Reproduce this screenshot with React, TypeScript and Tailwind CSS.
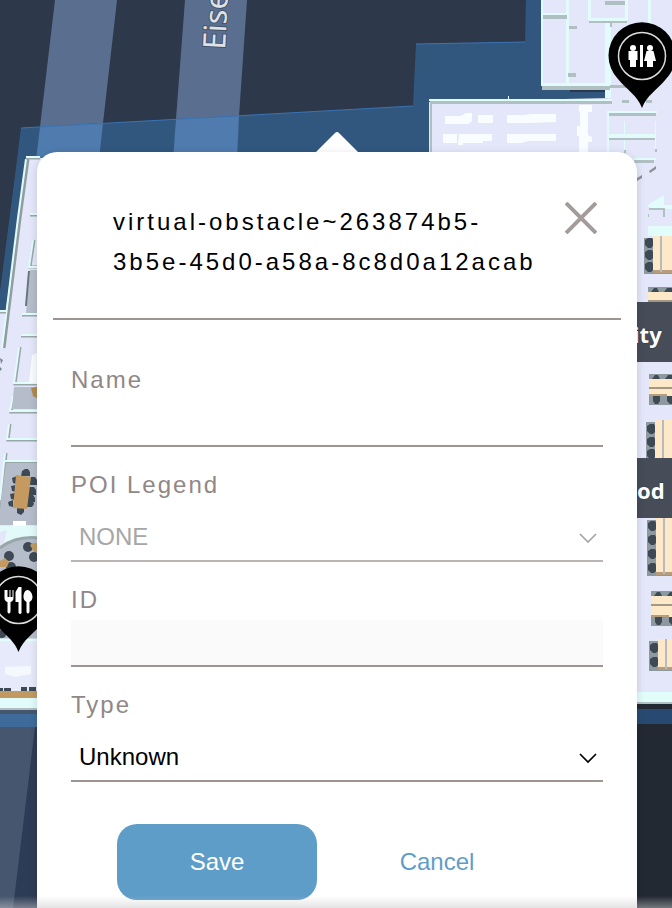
import React, { useState } from "react";

const BLUE = "#31577f";
const FLOOR = "#e3e7f9";
const WALL = "#e2fcfc";
const SHADE = "#b0bfc2";
const WOOD = "#fde9c8";
const CHAIR = "#3d4a56";
const MAT = "#8d999f";

type Box = [x: number, y: number, w: number, h: number];

function Boxes({ items, fill }: { items: Box[]; fill: string }) {
  return (
    <g fill={fill}>
      {items.map(([x, y, w, h], i) => (
        <rect key={i} x={x} y={y} width={w} height={h} />
      ))}
    </g>
  );
}

/* Desk block with chairs along its left side. */
function SideDesk({ x, y, h, rows }: { x: number; y: number; h: number; rows: number[] }) {
  return (
    <g>
      <rect x={x} y={y} width="40" height={h} fill={MAT} />
      <rect x={x + 9} y={y - 2} width="40" height={h} fill={WOOD} />
      <rect x={x + 9} y={y + h - 4} width="30" height="3" fill="#b59d7d" />
      <rect x={x + 16} y={y - 2} width="2" height={h} fill="#b8bac0" />
      {rows.map((r) => (
        <path key={r} d={`M${x + 1} ${r - 3}l3-2h4l1 2v6l-2 2h-3l-3-3z`} fill={CHAIR} />
      ))}
    </g>
  );
}

/* Desk block with chairs above and below. */
function FlatDesk({ x, y, h }: { x: number; y: number; h: number }) {
  return (
    <g>
      <rect x={x} y={y} width="40" height={h} fill={MAT} />
      <g fill={CHAIR}>
        <path d={`M${x + 3} ${y + 5}l3-4h3l2 4zM${x + 16} ${y + 5}l3-4h8v4z`} />
        <path d={`M${x + 4} ${y + h - 9}h7v5l-2 3h-3l-2-3zM${x + 18} ${y + h - 9}h9v8h-6l-3-3z`} />
      </g>
      <rect x={x} y={y + 5} width="40" height={h - 14} fill={WOOD} />
      <rect x={x} y={y + 13} width="40" height="2" fill="#a39885" />
      <rect x={x} y={y + h - 11} width="18" height="2" fill="#b59d7d" />
    </g>
  );
}

function Pin({ x, y, children }: { x: number; y: number; children: React.ReactNode }) {
  return (
    <g transform={`translate(${x} ${y})`}>
      <path d="M0 52C-5 39-14 35-24 23A33.500 33.500 0 1 1 24 23C14 35 5 39 0 52Z" fill="#000" />
      <circle r="23.500" fill="none" stroke="#ddd" strokeWidth="1.500" />
      <g fill="#fff">{children}</g>
    </g>
  );
}

function FloorMap() {
  return (
    <svg
      aria-hidden="true"
      className="absolute inset-0 h-full w-full"
      viewBox="0 0 672 908"
      preserveAspectRatio="xMidYMin slice"
      fontFamily='"Noto Sans", sans-serif'
    >
      <rect width="672" height="908" fill="#2d394b" />
      <path d="M21 128L413 106 416 44 525 42 526 0H672V908H0V290Z" fill={BLUE} />
      <path d="M55 0H117L103 123 40 127Z" fill="#5a6f8f" />
      <path d="M185 0H247L239 116 176 119Z" fill="#5a6f8f" />
      <path d="M40 127L103 123 99 160H36ZM176 119L239 116 237 160H173Z" fill="#4f7bae" />
      <path d="M21 128L413 106M416 44L525 42" stroke="#3b74b3" strokeWidth="1" />
      <text
        transform="translate(225 50) rotate(-87)"
        fontSize="31"
        fill="#dfe1e4"
        stroke="#42536c"
        strokeWidth="2"
        paintOrder="stroke"
      >
        Eise
      </text>

      {/* north-east rooms */}
      <path d="M542 0H672V720H600V152H429V102L610 98V88H542Z" fill={FLOOR} />
      <rect x="544" y="90" width="65" height="7" fill={BLUE} />
      <rect x="570" y="89" width="39" height="3" fill="#29384f" />
      <Boxes
        fill={WALL}
        items={[
          [541, 0, 2, 86], [566, 0, 3, 86], [588, 0, 3, 20], [605, 20, 6, 78], [625, 0, 3, 20],
          [648, 0, 3, 26], [543, 13, 24, 2], [542, 83, 68, 3], [589, 18, 38, 3], [429, 99, 183, 2],
          [508, 96, 1, 4], [607, 111, 50, 2], [607, 111, 2, 41], [607, 134, 49, 4], [624, 121, 1, 31],
          [655, 121, 1, 30], [634, 158, 22, 2], [650, 205, 22, 4], [648, 226, 24, 10],
        ]}
      />
      <Boxes
        fill={SHADE}
        items={[
          [543, 15, 24, 4], [542, 86, 68, 4], [610, 85, 17, 3], [605, 1, 20, 4], [589, 21, 38, 2],
          [610, 21, 2, 6], [569, 26, 8, 3], [568, 73, 8, 4], [430, 101, 182, 3], [430, 103, 2, 49],
          [622, 100, 7, 3], [646, 100, 6, 3], [609, 113, 47, 3], [609, 138, 46, 2], [624, 150, 2, 3],
          [634, 160, 20, 3], [655, 149, 2, 3], [663, 208, 2, 9], [649, 208, 14, 2], [648, 214, 1, 3],
        ]}
      />
      <path d="M648 205L664 195V207H648Z" fill={WALL} />
      <path d="M637 178L642 175V178L637 181ZM649 171L656 166V169L650 173Z" fill="#899496" />
      <g fill="#fafdff">
        <path d="M445 116H461L466 113H472V121L468 124H445ZM478 115H493V123H478ZM507 115H524L532 114H556V122L530 123H507Z" />
        <path d="M443 134H457V143H443ZM459 134H492V141H483V143H463V145H458ZM507 134H556V141H528L522 143H507Z" />
        <path d="M579 105H592V112H588V135L592 137V142H588V152H579V136H577V126H580V112H579Z" />
      </g>

      {/* east desks */}
      <SideDesk x={644} y={238} h={36} rows={[243, 255, 267]} />
      <FlatDesk x={648} y={287} h={30} />
      <FlatDesk x={649} y={374} h={31} />
      <SideDesk x={646} y={422} h={45} rows={[429, 442, 454]} />
      <SideDesk x={647} y={520} h={56} rows={[526, 540, 554, 568]} />
      <FlatDesk x={651} y={591} h={35} />
      <SideDesk x={649} y={641} h={30} rows={[648, 662]} />
      <Boxes fill="#464d59" items={[[600, 302, 72, 60], [600, 458, 72, 60]]} />
      <g fontSize="22" fontWeight="700" fill="#fff" stroke="#343b46" strokeWidth="1" paintOrder="stroke">
        <text x="633" y="343">ity</text>
        <text x="637" y="499">od</text>
      </g>
      <Boxes fill={WALL} items={[[630, 692, 42, 10]]} />
      <Boxes fill={SHADE} items={[[630, 702, 42, 2]]} />
      <Boxes fill="#222933" items={[[600, 704, 72, 204]]} />
      <Boxes fill="#284a72" items={[[630, 709, 42, 15]]} />

      {/* west wing */}
      <path d="M27 158H60V712H0V312L6 310Z" fill={FLOOR} />
      <path d="M0 150H18L0 290Z" fill="#2d394b" />
      <path d="M28 159L20 218 4 348" fill="none" stroke="#8f9d9f" strokeWidth="3" />
      <path d="M26 159L18 218 2 348" fill="none" stroke={WALL} strokeWidth="2" />
      <path
        d="M26 158H40M30 215H40M34 240L30 267H40M22 315H40M21 336H40M20 347L15 384H40M14 396L11 412H40M10 424L8 440H40M0 312H6M6 453L1 510M4 462H40"
        fill="none"
        stroke="#98a7a8"
        strokeWidth="3"
      />
      <path
        d="M26 157H40M30 214H40M33 240L29 267H40M22 314H40M21 335H40M19 347L14 383H40M13 396L10 411H40M9 424L7 439H40M0 311H6M5 453L0 500M4 461H40"
        fill="none"
        stroke={WALL}
        strokeWidth="2"
      />
      <path d="M30 270H40V313H26ZM14 387H40V409H12Z" fill="#b6bdca" />
      <path d="M29 271L26 306" stroke="#66777c" strokeWidth="2" />
      <path d="M32 355L40 352V383H29Z" fill="#fafdff" />
      <path d="M31 388L40 386V400L33 396Z" fill="#b38a50" />
      <path d="M0 358L3 360 1 364ZM0 367L2 369 0 371Z" fill="#78878a" />

      <path d="M6 463H40V525H0V510Z" fill="#b6bdca" />
      <path d="M13 521H26V526H13Z" fill="#fff" />
      <g fill={CHAIR}>
        <path d="M22 471l3-2h3l2 3v4h-9zM17 507h7v5l-3 3-4-2z" />
        <path d="M12 478l5-2v8l-4-1zM11 486l5-1v7l-4-1zM10 494l5-1v7l-4-1zM8 502l5-2v7l-4-1z" />
        <path d="M29 477h6l2 3v5h-8zM29 487h5l2 3v5h-8zM28 495h5l2 3v4h-7zM27 501h6l1 3-2 3h-5z" />
      </g>
      <path d="M16 475L31 477 27 509 13 508Z" fill="#c49a60" />
      <path d="M0 526H40V600H0Z" fill="#e2fafa" />
      <path d="M0 532L7 530 0 560Z" fill={FLOOR} />
      <path d="M0 548C10 540 23 536 40 538V640H0Z" fill="#b6bdca" />
      <path d="M0 548C10 540 23 536 40 538" fill="none" stroke="#98a7a8" strokeWidth="3" />
      <g fill={CHAIR}>
        <circle cx="28" cy="547" r="5" />
        <circle cx="34" cy="557" r="5" />
        <circle cx="9" cy="556" r="5" />
        <circle cx="11" cy="567" r="5" />
        <circle cx="2" cy="634" r="4" />
      </g>
      <path d="M30 545L33 543H40V552H34ZM0 561L5 558 9 562 7 567H0Z" fill="#c49a60" />
      <path d="M0 641H40V691H0Z" fill="#e7eafb" />
      <path d="M0 640H40" stroke={WALL} strokeWidth="3" />
      <path d="M5 667L31 666V674L15 677 5 674Z" fill="#f5f8fd" />
      <path d="M0 688H3V691H0ZM4 688H11V691H4ZM21 687H27V691H21ZM29 687H36V691H29Z" fill={CHAIR} />
      <Boxes fill="#c09a62" items={[[0, 691, 40, 7]]} />
      <Boxes fill={WALL} items={[[0, 698, 40, 10]]} />
      <Boxes fill={SHADE} items={[[0, 708, 40, 2]]} />
      <Boxes fill="#46566f" items={[[0, 710, 40, 4]]} />
      <Boxes fill="#3f6b9b" items={[[0, 714, 40, 13]]} />
      <rect y="727" width="60" height="181" fill="#2d3c56" />
      <path d="M0 727H35L13 908H0Z" fill="#46566f" />

      <Pin x={642} y={56}>
        <circle cx="-9" cy="-8" r="3" />
        <path d="M-13.500-5H-4.500V4H-6V11H-12V4H-13.500Z" />
        <rect x="-2" y="-11" width="3" height="22" />
        <circle cx="8" cy="-8" r="3" />
        <path d="M4.500-5H11.500L14 5H11V11H5V5H2Z" />
      </Pin>
      <Pin x={18.5} y={600}>
        <path d="M-14-10v8q0 3 3 4v10q1 3 3 0v-10q3-1 3-4v-8h-1v7h-2v-7h-1v7h-2v-7z" />
        <path d="M-3 2v-10l3-5h3v26q-1 2-3 0v-11z" />
        <path d="M9-10c-3 0-4 4-4 7 0 2 1 4 3 5v10q1 3 3 0v-10c2-1 3-3 3-5 0-3-2-7-5-7z" />
      </Pin>
    </svg>
  );
}

function Label({ htmlFor, children }: { htmlFor: string; children: React.ReactNode }) {
  return (
    <label htmlFor={htmlFor} className="block text-2xl leading-10 tracking-[2px] text-[#918786]">
      {children}
    </label>
  );
}

function TextField({ id, label, disabled }: { id: string; label: string; disabled?: boolean }) {
  return (
    <div>
      <Label htmlFor={id}>{label}</Label>
      <input
        id={id}
        type="text"
        disabled={disabled}
        className="block h-[47px] w-full border-b-2 border-[#9c9594] bg-white px-2 text-2xl text-black outline-none disabled:bg-[#fafafa]"
      />
    </div>
  );
}

function SelectField({
  id,
  label,
  options,
  disabled,
}: {
  id: string;
  label: string;
  options: string[];
  disabled?: boolean;
}) {
  return (
    <div>
      <Label htmlFor={id}>{label}</Label>
      <div className="relative mt-2.5">
        <select
          id={id}
          disabled={disabled}
          className="peer block h-[47px] w-full appearance-none border-b-2 border-[#9c9594] bg-white pr-10 pb-0.5 pl-2 text-2xl text-black opacity-100 outline-none disabled:border-[#bab4b4] disabled:text-[#a6a6a6]"
        >
          {options.map((o) => (
            <option key={o}>{o}</option>
          ))}
        </select>
        <svg
          aria-hidden="true"
          viewBox="0 0 20 12"
          className="pointer-events-none absolute top-[17px] right-[5px] h-3 w-5 text-black peer-disabled:text-[#a6a6a6]"
          fill="none"
          stroke="currentColor"
          strokeWidth="1.700"
        >
          <path d="M2 2L10 10 18 2" />
        </svg>
      </div>
    </div>
  );
}

export default function App() {
  const [open, setOpen] = useState(true);
  const close = () => setOpen(false);

  return (
    <main className="relative flex min-h-screen flex-col overflow-hidden font-['Liberation_Sans',Arial,sans-serif]">
      <FloorMap />
      {open && (
        <div className="relative flex grow flex-col pt-[132px] pr-[35px] pl-[37px]">
          <svg aria-hidden="true" viewBox="0 0 42 20" className="h-5 w-[42px] self-center fill-white">
            <path d="M0 20L19 1Q21-1 23 1L42 20Z" />
          </svg>
          <section
            aria-labelledby="popup-title"
            className="mx-auto w-full max-w-[600px] grow rounded-t-[20px] bg-white px-4 pb-2 shadow-[0_2px_8px_rgba(0,0,0,0.15)]"
          >
            <header className="flex items-start justify-between gap-5 border-b-2 border-[#9c9594] pt-[50px] pr-6 pb-9 pl-[60px]">
              <h1 id="popup-title" className="min-w-0 text-2xl leading-10 tracking-[3px] break-words text-black">
                virtual-obstacle~263874b5-3b5e-45d0-a58a-8c8d0a12acab
              </h1>
              <button type="button" aria-label="Close" onClick={close} className="shrink-0 text-[#a49c9b]">
                <svg viewBox="0 0 32 32" className="size-8" fill="none" stroke="currentColor" strokeWidth="4">
                  <path d="M1 1L31 31M31 1L1 31" />
                </svg>
              </button>
            </header>
            <form className="flex flex-col gap-[18px] px-[18px] pt-10" onSubmit={(e) => e.preventDefault()}>
              <TextField id="name" label="Name" />
              <SelectField id="legend" label="POI Legend" options={["NONE"]} disabled />
              <TextField id="poi-id" label="ID" disabled />
              <SelectField id="type" label="Type" options={["Unknown"]} />
              <div className="mt-6 flex gap-5 pl-[46px] text-2xl">
                <button type="submit" className="h-[76px] w-[200px] rounded-[20px] bg-[#5f9dc9] text-white">
                  Save
                </button>
                <button type="button" onClick={close} className="h-[76px] w-[200px] text-[#5f9dc9]">
                  Cancel
                </button>
              </div>
            </form>
          </section>
        </div>
      )}
      <div className="pointer-events-none absolute inset-x-0 bottom-0 h-3 bg-linear-to-t from-[#c8c8c8]/50 to-transparent" />
    </main>
  );
}
